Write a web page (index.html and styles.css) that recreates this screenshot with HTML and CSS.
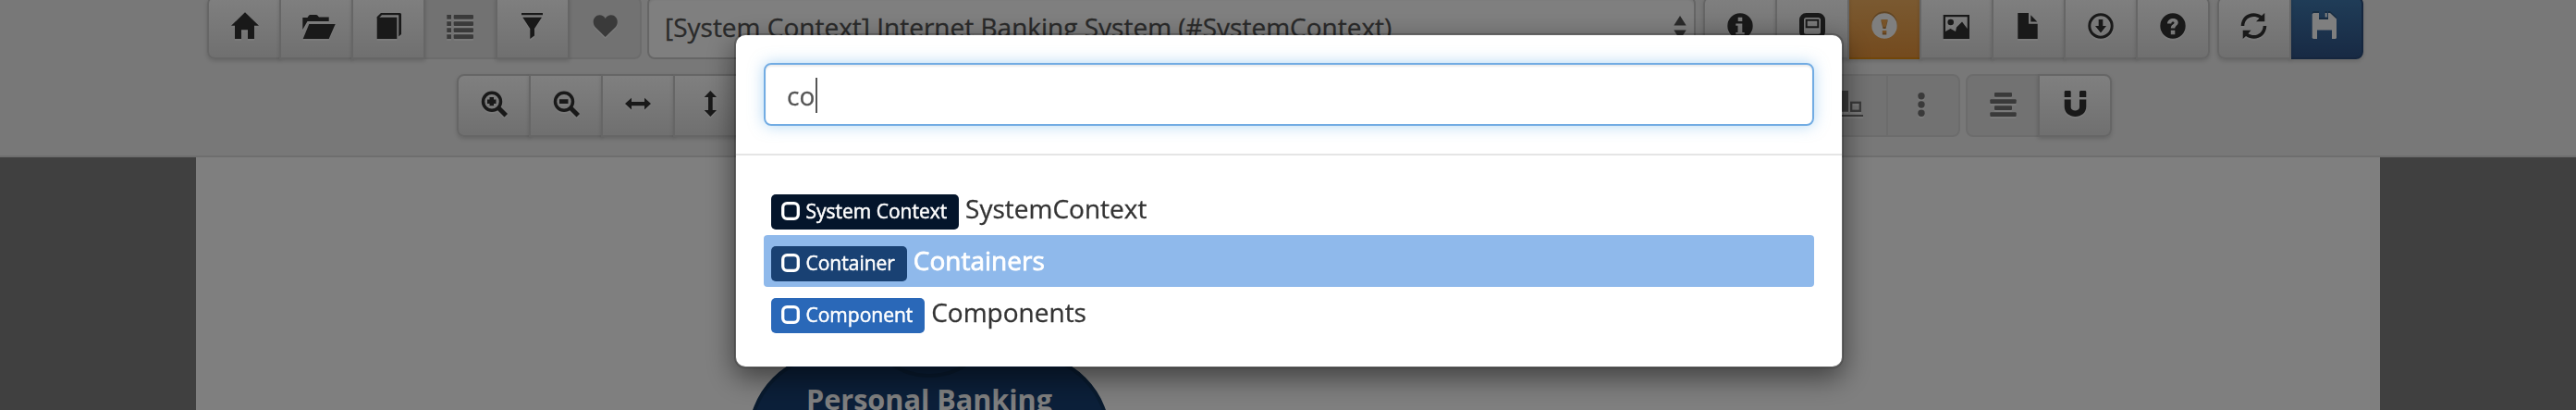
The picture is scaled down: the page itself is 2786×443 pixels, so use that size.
FILE: index.html
```html
<!DOCTYPE html>
<html lang="en">
<head>
<meta charset="utf-8">
<title>Internet Banking System</title>
<link rel="stylesheet" href="styles.css">
</head>
<body>
<div class="page">
  <header class="header">
    <div class="toolbar toolbar-main">
      <div class="group">
        <span class="btn"><svg class="icon" viewBox="0 0 28 28"><path d="M15 -.7L30 13.8H25V28H18V18.300H11V28H4V13.800H0Z"/></svg></span>
        <span class="btn"><svg class="icon" viewBox="0 0 28 28"><path d="M-.7 5H4.500L6 2.800Q6.500 2 7.500 2H14Q15 2 15.500 2.800L17 4.500H27.700V9H4.500L-.7 18ZM6.300 12H34.700L27.700 28H-.3Z"/></svg></span>
        <span class="btn"><svg class="icon" viewBox="0 0 28 28"><path d="M1.700 4.700H23.300V28H1.700Z"/><path d="M1.700 5.500V4.300L6 0H26.500Q28 0 28 1.500V23L25.200 25.500V2.300H7L3.700 5.500Z"/></svg></span>
        <span class="btn disabled"><svg class="icon" viewBox="0 0 28 28"><path d="M0 2H4V6.700H-.7V2ZM0 9.300H4V14H-.7V9.300ZM0 16.300H4V21H-.7V16.300ZM0 23.300H4V28H-.7V23.300Z"/><rect x="6.700" y="2" width="21.300" height="4.700" rx="1"/><rect x="6.700" y="9.200" width="21.300" height="4.700" rx="1"/><rect x="6.700" y="16.200" width="21.300" height="4.700" rx="1"/><rect x="6.700" y="23.200" width="21.300" height="4.700" rx="1"/></svg></span>
        <span class="btn"><svg class="icon" viewBox="0 0 28 28"><path d="M2 0H25V2.300H2ZM3.300 4.700H24L16 17V24.500L11.300 28V17Z"/></svg></span>
        <span class="btn disabled"><svg class="icon" viewBox="0 0 28 28"><path d="M14.700 26L4 15.500C-1 9.500 3 2.300 8.500 2.300Q12.500 2.300 14.700 6Q17 2.300 21 2.300C26.500 2.300 30.500 9.500 25.500 15.500Z"/></svg></span>
      </div>
      <div class="select"><span>[System Context] Internet Banking System (#SystemContext)</span>
        <svg class="arrows" viewBox="0 0 14 28"><path d="M.3 10.500L7 0L13.700 10.500ZM.3 15.500H13.700L7 26Z"/></svg>
      </div>
      <div class="group">
        <span class="btn"><svg class="icon" viewBox="0 0 28 28"><path fill-rule="evenodd" d="M14 .3A13.700 13.700 0 1 1 14 27.700A13.700 13.700 0 1 1 14 .3ZM11.700 4.700V9H16.300V4.700ZM9.300 11.500V13.800H11.500V21H9.300V23.300H18.700V21H16.300V11.500Z"/></svg></span>
        <span class="btn"><svg class="icon" viewBox="0 0 28 28"><rect class="line" x="2.500" y="2.500" width="23" height="23" rx="5" stroke-width="5"/><rect class="line" x="7.700" y="7.700" width="12.600" height="7.600" stroke-width="2"/></svg></span>
        <span class="btn warning"><svg class="icon" viewBox="0 0 28 28"><path fill-rule="evenodd" d="M14 .3A13.700 13.700 0 1 1 14 27.700A13.700 13.700 0 1 1 14 .3ZM10.500 7V9L12.500 17H15.500L17.500 9V7ZM11.800 19V23.500H16.300V19Z"/></svg></span>
        <span class="btn"><svg class="icon" viewBox="0 0 28 28"><path fill-rule="evenodd" d="M-.3 2H28V28H-.3ZM2 4.300V20L7.500 17L13 20L14 15.500L20 9.500L25.700 17V4.300Z"/><circle cx="7.700" cy="10" r="3.300"/></svg></span>
        <span class="btn"><svg class="icon" viewBox="0 0 28 28"><path d="M2.300 0H14V11.800H23.700V28H2.300ZM16.300 2.300L23.300 9.500H16.300Z"/></svg></span>
        <span class="btn"><svg class="icon" viewBox="0 0 28 28"><circle class="line" cx="14" cy="14" r="12.200" stroke-width="3"/><path d="M11.700 7H16.300V14H20L14 21.500L8 14H11.700Z"/></svg></span>
        <span class="btn"><svg class="icon" viewBox="0 0 28 28"><path fill-rule="evenodd" d="M14 .3A13.700 13.700 0 1 1 14 27.700A13.700 13.700 0 1 1 14 .3ZM8 11.500C8 4.300 19.700 4.200 19.700 10.300C19.700 13.500 16.300 14 16.300 16.500H11.800C11.800 12.500 15.500 12.500 15.500 10.500C15.500 9 12.300 9 12.300 11.500ZM11.800 18.800V23.300H16.300V18.800Z"/></svg></span>
      </div>
      <div class="group">
        <span class="btn"><svg class="icon" viewBox="0 0 28 28"><path d="M-.3 14C0 1.500 13 -3.300 22 3L25.300 0V9.300H16L19.500 5.700C13 1.500 3.500 5 3.300 14ZM27.300 14C27 26.500 14 31.300 5 25L1.700 28V18.700H10.500L7.500 22.300C14 26.500 23.500 23 23.700 14Z"/></svg></span>
        <span class="btn primary"><svg class="icon" viewBox="0 0 28 28"><path d="M0 0H6V7H16V0H18L25 6.500V27L24 28H20V18.500H4V28H0L-1.300 27V1.300ZM12.700 0H14.700V4.500H12.700Z"/></svg></span>
      </div>
    </div>
    <div class="toolbar toolbar-diagram">
      <div class="group">
        <span class="btn"><svg class="icon" viewBox="0 0 28 28"><circle class="line" cx="12" cy="11.800" r="9.500" stroke-width="3.500"/><path d="M17.500 20.500L21 17L29 25L25.500 28.500ZM9.500 7H14V9.500H16.500V14H14V16.300H9.500V14H7V9.500H9.500Z"/></svg></span>
        <span class="btn"><svg class="icon" viewBox="0 0 28 28"><circle class="line" cx="12" cy="11.800" r="9.500" stroke-width="3.500"/><path d="M17.500 20.500L21 17L29 25L25.500 28.500ZM7 9.300H16.500V14H7Z"/></svg></span>
        <span class="btn"><svg class="icon" viewBox="0 0 28 28"><path d="M0 14L7 7.700V12H21V7.700L28 14L21 20.500V16.200H7V20.500Z"/></svg></span>
        <span class="btn"><svg class="icon" viewBox="0 0 28 28"><path d="M14.300 0L21 7H16.700V21H21L14.300 28L7.700 21H12V7H7.700Z"/></svg></span>
      </div>
      <div class="group-pair">
        <div class="group">
          <span class="btn disabled"><svg class="icon" viewBox="0 0 28 28"><path d="M4 0H11V22.700H4ZM0 26H27V28H0Z"/><rect class="line" x="14.200" y="12.800" width="9.600" height="9" stroke-width="2.300"/></svg></span>
          <span class="btn disabled"><svg class="icon" viewBox="0 0 28 28"><circle cx="12" cy="5.700" r="3.700"/><circle cx="12" cy="15" r="3.700"/><circle cx="12" cy="24.300" r="3.700"/></svg></span>
        </div>
        <div class="group">
          <span class="btn disabled"><svg class="icon" viewBox="0 0 28 28"><rect x="5" y="2" width="19" height="4.700" rx="1"/><rect x=".3" y="9.200" width="28.400" height="4.700" rx="1"/><rect x="5" y="16.200" width="19" height="4.700" rx="1"/><rect x=".3" y="23.200" width="28.400" height="4.700" rx="1"/></svg></span>
          <span class="btn"><svg class="icon" viewBox="0 0 28 28"><path d="M2.700 1L3.500 0H9L9.700 1V7H2.700ZM19 1L20 0H25.500L26.300 1V7H19ZM2.700 9.500H9.700V18C9.700 22.500 19 22.500 19 18V9.500H26.300V17C26.300 31.500 2.700 31.500 2.700 17Z"/></svg></span>
        </div>
      </div>
    </div>
  </header>
  <main class="workspace">
    <div class="canvas">
      <svg class="person" viewBox="0 0 400 273">
        <rect x="6" y="213" width="388" height="300" rx="90"/>
        <circle cx="200" cy="166" r="70"/>
        <text x="200" y="273">Personal Banking</text>
      </svg>
    </div>
  </main>
</div>
<div class="backdrop"></div>
<div class="modal">
  <div class="modal-header">
    <div class="search"><span>co</span><i class="caret"></i></div>
  </div>
  <ul class="results">
    <li><span class="label context"><svg class="box" viewBox="0 0 20 20"><rect x="1.700" y="1.700" width="16.600" height="16.600" rx="4.500"/></svg>System Context</span> SystemContext</li>
    <li class="active"><span class="label container"><svg class="box" viewBox="0 0 20 20"><rect x="1.700" y="1.700" width="16.600" height="16.600" rx="4.500"/></svg>Container</span> Containers</li>
    <li><span class="label component"><svg class="box" viewBox="0 0 20 20"><rect x="1.700" y="1.700" width="16.600" height="16.600" rx="4.500"/></svg>Component</span> Components</li>
  </ul>
</div>
</body>
</html>
```
FILE: styles.css
```css
* { box-sizing: border-box; }
body {
  margin: 0;
  width: 2786px;
  height: 443px;
  overflow: hidden;
  font: 28px/40px "Open Sans", sans-serif;
  color: #333;
  -webkit-text-stroke: .3px;
}
.page {
  height: 443px;
  display: flex;
  flex-direction: column;
  overflow: hidden;
  background: #808080;
}
.header {
  height: 170px;
  flex: none;
  background: #f0f0f0;
  border-bottom: 2px solid #dcdcdc;
}
.toolbar { display: flex; }
.toolbar-main { margin: -4px 0 16px 224px; gap: 8px; }
.toolbar-diagram { width: 1790px; margin-left: 494px; justify-content: space-between; }
.group-pair { display: flex; gap: 6px; }
.group { display: flex; }
.btn {
  width: 80px;
  height: 68px;
  padding-bottom: 4px;
  display: flex;
  align-items: center;
  justify-content: center;
  border: 2px solid #ccc;
  background: linear-gradient(#fff, #e0e0e0);
  box-shadow: 0 2px 4px rgba(0, 0, 0, .15);
}
.btn + .btn { margin-left: -2px; }
.btn:first-child { border-radius: 8px 0 0 8px; }
.btn:last-child { border-radius: 0 8px 8px 0; }
.disabled {
  background: #e4e4e4;
  border-color: #d8d8d8;
  box-shadow: none;
}
.btn:not(.disabled):not(.warning):not(.primary) { position: relative; }
.icon {
  width: 28px;
  height: 28px;
  overflow: visible;
  fill: #333;
  stroke: none;
  filter: drop-shadow(0 2px 0 rgba(255, 255, 255, .6));
}
.icon .line { fill: none; stroke: #333; }
.disabled .icon { fill: #747474; }
.disabled .icon .line { stroke: #747474; }
.warning {
  background: linear-gradient(#f5b463, #e8953c);
  border-color: #e38d13;
}
.primary {
  background: linear-gradient(#407ab0, #305488);
  border-color: #2b4d7c;
}
.warning .icon, .primary .icon {
  fill: #fff;
  filter: drop-shadow(0 -2px 0 rgba(0, 0, 0, .2));
}
.select {
  width: 1134px;
  height: 68px;
  margin-left: -2px;
  padding: 11px 8px 0 17px;
  display: flex;
  justify-content: space-between;
  border: 2px solid #ccc;
  border-radius: 8px;
  background: #fff;
  box-shadow: inset 0 2px 2px rgba(0, 0, 0, .075);
  color: #555;
}
.arrows { width: 14px; height: 28px; margin-top: 8px; fill: #555; }
.workspace { flex: 1; padding: 0 212px; }
.canvas { height: 273px; background: #fff; }
.person { display: block; width: 400px; height: 273px; margin-left: 593px; }
.person rect, .person circle { fill: #173f73; stroke: #12365f; stroke-width: 4; }
.person text { fill: #fff; font: bold 30.600px "Open Sans", sans-serif; text-anchor: middle; }
.backdrop { position: fixed; inset: 0; background: rgba(0, 0, 0, .5); }
.modal {
  position: fixed;
  left: 794px;
  top: 36px;
  width: 1200px;
  height: 362px;
  border: 2px solid rgba(0, 0, 0, .2);
  border-radius: 12px;
  background: #fff;
  background-clip: padding-box;
  box-shadow: 0 10px 30px rgba(0, 0, 0, .5);
}
.modal-header { padding: 30px; border-bottom: 2px solid #e5e5e5; }
.search {
  height: 68px;
  padding: 13px 23px;
  display: flex;
  border: 2px solid #72ace3;
  border-radius: 8px;
  box-shadow: inset 0 2px 2px rgba(0, 0, 0, .075), 0 0 16px rgba(102, 175, 233, .5);
  color: #555;
}
.caret { width: 2px; height: 38px; margin: 1px 0 0 1px; background: #555; }
.results { list-style: none; margin: 0; padding: 30px; }
.results li { height: 56px; padding: 7px 8px; border-radius: 4px; }
.results .active { background: #8fb9eb; color: #fff; -webkit-text-stroke: .8px #fff; }
.label {
  padding: 4.200px 12.600px 6.300px 11px;
  border-radius: 5px;
  color: #fff;
  font-size: 21px;
  line-height: 1;
  -webkit-text-stroke: .5px #fff;
}
.context { background: #04152b; }
.container { background: #194173; }
.component { background: #2a68b8; }
.box { width: 20px; height: 20px; margin-right: 6.500px; vertical-align: -2px; fill: none; stroke: #fff; stroke-width: 3.300; }
```
